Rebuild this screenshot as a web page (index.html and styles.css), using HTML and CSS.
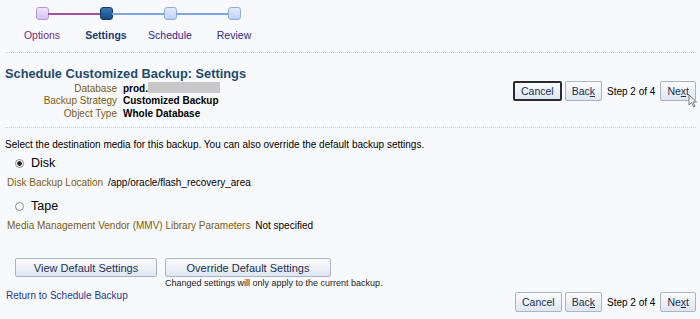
FILE: index.html
```html
<!DOCTYPE html>
<html lang="en">
<head>
  <meta charset="UTF-8" />
  <title>Schedule Customized Backup: Settings</title>
  <link rel="stylesheet" href="styles.css">
</head>
<body>

  <!-- train -->
  <div class="train">
    <div class="step done">
      <span class="dot"></span>
      <span class="label">Options</span>
    </div>
    <div class="step current">
      <span class="dot"></span>
      <span class="label">Settings</span>
    </div>
    <div class="step">
      <span class="dot"></span>
      <span class="label">Schedule</span>
    </div>
    <div class="step last">
      <span class="dot"></span>
      <span class="label">Review</span>
    </div>
  </div>

  <div class="sep"></div>

  <div class="header">
    <div class="header-left">
      <h1>Schedule Customized Backup: Settings</h1>
      <table class="info">
        <tr>
          <td class="lbl">Database</td>
          <td class="val">prod.<span class="blur"></span></td>
        </tr>
        <tr>
          <td class="lbl">Backup Strategy</td>
          <td class="val">Customized Backup</td>
        </tr>
        <tr>
          <td class="lbl">Object Type</td>
          <td class="val">Whole Database</td>
        </tr>
      </table>
    </div>
    <div class="nav top">
      <button class="btn focus">Cancel</button>
      <button class="btn">Bac<u>k</u></button>
      <span class="stepnum">Step 2 of 4</span>
      <button class="btn">Ne<u>x</u>t</button>
      <svg class="cursor" width="10" height="14" viewBox="0 0 10 14">
        <path d="M1 1 L1 11 L3.5 8.5 L5.5 13 L7 12.3 L5 8 L8.5 8 Z" fill="#fff" stroke="#555" stroke-width="0.8"/>
      </svg>
    </div>
  </div>

  <div class="sep"></div>

  <p class="intro">Select the destination media for this backup. You can also override the default backup settings.</p>

  <label class="radio"><input type="radio" name="media" checked> Disk</label>
  <div class="field"><span class="lbl">Disk Backup Location</span> /app/oracle/flash_recovery_area</div>

  <label class="radio"><input type="radio" name="media"> Tape</label>
  <div class="field"><span class="lbl">Media Management Vendor (MMV) Library Parameters</span> Not specified</div>

  <div class="actions">
    <button class="btn wide view">View Default Settings</button>
    <div class="override">
      <button class="btn wide">Override Default Settings</button>
      <div class="hint">Changed settings will only apply to the current backup.</div>
    </div>
  </div>

  <div class="footer">
    <a href="#" class="back-link">Return to Schedule Backup</a>
    <div class="nav">
      <button class="btn">Cancel</button>
      <button class="btn">Bac<u>k</u></button>
      <span class="stepnum">Step 2 of 4</span>
      <button class="btn">Ne<u>x</u>t</button>
    </div>
  </div>

</body>
</html>
```

FILE: styles.css
```css
body {
  font-family: 'Liberation Sans', Arial, sans-serif;
  font-size: 10px;
  margin: 0;
  padding: 0 4px 0 5px;
  background-color: #f8f9fc;
  color: #000;
}

/* train */
.train {
  display: flex;
  padding: 7px 0 0 5px;
  height: 40px;
}

.step {
  position: relative;
  width: 64px;
  display: flex;
  flex-direction: column;
  align-items: center;
}

.step::after {
  content: "";
  position: absolute;
  top: 6px;
  left: 38px;
  width: 52px;
  height: 2px;
  background-color: #7ea4e4;
}

.step.done::after {
  background-color: #a5509e;
}

.step.last::after {
  display: none;
}

.dot {
  width: 11px;
  height: 11px;
  border-radius: 3px;
  border: 1px solid #90b0e2;
  background: linear-gradient(#e4ecfb, #bcd0f2);
}

.done .dot {
  border-color: #b497dc;
  background: linear-gradient(#efe4fb, #d5c0f0);
}

.current .dot {
  border-color: #103c6c;
  background: linear-gradient(#3a78b4, #154c86);
}

.label {
  margin-top: 9px;
  font-size: 10.5px;
  color: #2a2a8c;
}

.done .label {
  color: #7a2a78;
}

.current .label {
  font-weight: bold;
  color: #1b3a6a;
}

.sep {
  border-top: 1px dotted #c8ccd4;
  margin: 5px 0;
}

/* header */
.header {
  display: flex;
  justify-content: space-between;
  height: 64px;
}

h1 {
  font-size: 12.8px;
  color: #1f4a6e;
  margin: 8px 0 1px 0;
  font-weight: bold;
}

.info {
  border-collapse: collapse;
}

.info td {
  padding: 0;
  height: 12.5px;
}

.info .lbl {
  text-align: right;
  width: 112px;
  color: #7a5c12;
  padding-right: 6px;
}

.info .val {
  font-weight: bold;
}

.blur {
  display: inline-block;
  width: 72px;
  height: 11px;
  background-color: #c8c8c8;
  vertical-align: -1px;
}

.nav {
  display: flex;
  align-items: center;
  gap: 3px;
  position: relative;
}

.nav.top {
  align-self: flex-start;
  margin-top: 23px;
}

.btn {
  font-family: 'Liberation Sans', Arial, sans-serif;
  font-size: 10.5px;
  color: #1b2f56;
  background: linear-gradient(#fbfcfe, #dfe6f0);
  border: 1px solid #a8b4c6;
  border-radius: 2px;
  height: 20px;
  padding: 0 6px;
}

.btn.focus {
  border: 2px solid #2b2b2b;
  padding: 0 6px;
}

.stepnum {
  margin: 0 2px;
  font-size: 10px;
}

.cursor {
  position: absolute;
  right: -2px;
  top: 13px;
}

/* body */
.intro {
  margin: 11px 0 4px 0;
}

.radio {
  display: flex;
  align-items: center;
  font-size: 12.5px;
  margin-left: 10px;
  height: 18px;
}

.radio input {
  appearance: none;
  width: 9px;
  height: 9px;
  margin: 0 7px 0 0;
  border: 1px solid #8a8a8a;
  border-radius: 50%;
  background: #fff;
}

.radio input:checked {
  background: radial-gradient(circle, #222 0, #222 2px, #fff 2.5px);
}

.field {
  margin: 5px 0 4px 2px;
  height: 16px;
}

.field .lbl {
  color: #7a5c12;
  margin-right: 2px;
}

.actions {
  display: flex;
  gap: 8px;
  margin: 22px 0 0 10px;
}

.btn.wide {
  height: 19px;
  font-size: 11px;
  color: #1b2f56;
}

.btn.view {
  width: 142px;
}

.override .btn {
  width: 166px;
}

.hint {
  font-size: 9px;
  margin-top: 1px;
  color: #222;
}

.footer {
  display: flex;
  justify-content: space-between;
  align-items: flex-start;
  margin-top: -4px;
}

.back-link {
  color: #1a3a8c;
  text-decoration: none;
  margin: 6px 0 0 1px;
}

.footer .nav {
  margin-top: 8px;
}
```
